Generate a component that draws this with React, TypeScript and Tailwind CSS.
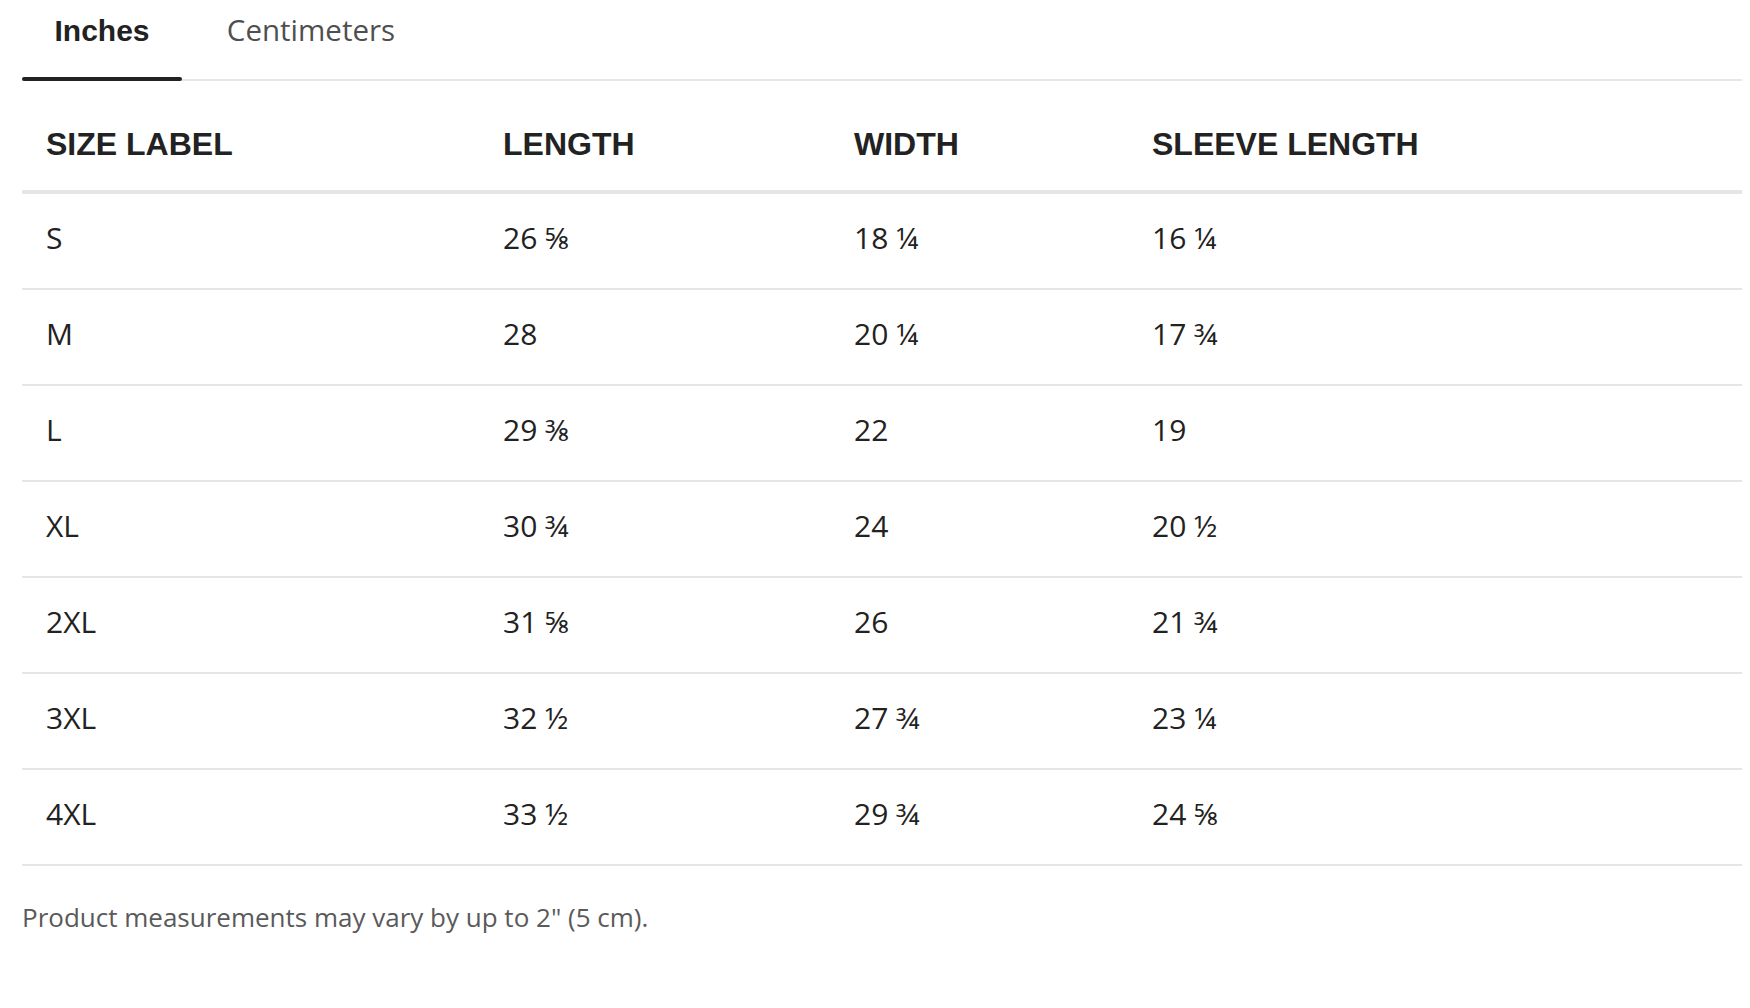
import React from "react";

const rows: [string, string, string, string][] = [
  ["S", "26 ⅝", "18 ¼", "16 ¼"],
  ["M", "28", "20 ¼", "17 ¾"],
  ["L", "29 ⅜", "22", "19"],
  ["XL", "30 ¾", "24", "20 ½"],
  ["2XL", "31 ⅝", "26", "21 ¾"],
  ["3XL", "32 ½", "27 ¾", "23 ¼"],
  ["4XL", "33 ½", "29 ¾", "24 ⅝"],
];

const grid = "grid grid-cols-[457px_351px_298px_1fr]";

export default function App() {
  return (
    <div className="w-[1750px] h-[1008px] bg-white pl-[22px] pr-[8px] font-['Open_Sans',sans-serif] text-[#222]">
      <div className="relative flex h-[81px] border-b-2 border-[#e6e6e6]">
        <div className="relative flex h-[60px] w-[160px] items-center justify-center font-['Liberation_Sans',sans-serif] text-[30px] font-bold text-[#222]">
          Inches
          <div className="absolute left-0 right-0 top-[77px] h-[4px] rounded-full bg-[#222]" />
        </div>
        <div className="flex h-[60px] w-[258px] items-center justify-center text-[29.5px] text-[#4f4f4f]">
          Centimeters
        </div>
      </div>
      <div className={`${grid} h-[113px] border-b-4 border-[#e6e6e6] pt-[47px] font-['Liberation_Sans',sans-serif] text-[32px] font-bold leading-none`}>
        <div className="pl-[24px]">SIZE LABEL</div>
        <div className="pl-[24px]">LENGTH</div>
        <div className="pl-[24px]">WIDTH</div>
        <div className="pl-[24px]">SLEEVE LENGTH</div>
      </div>
      {rows.map((r) => (
        <div key={r[0]} className={`${grid} h-[96px] items-center border-b-2 border-[#e6e6e6] pb-[7px] text-[30px] leading-none`}>
          {r.map((c, i) => (
            <div key={i} className="pl-[24px]">
              {c}
            </div>
          ))}
        </div>
      ))}
      <div className="mt-[36px] text-[26px] leading-[30px] text-[#5a5a5a]">
        Product measurements may vary by up to 2" (5 cm).
      </div>
    </div>
  );
}
